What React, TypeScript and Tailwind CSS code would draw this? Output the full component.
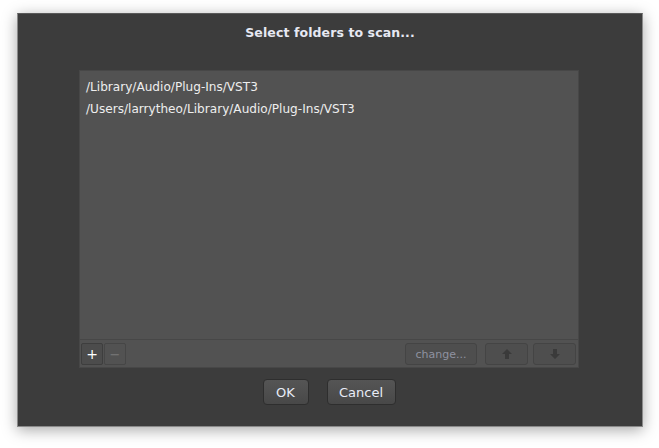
import React from 'react';

const paths = [
  '/Library/Audio/Plug-Ins/VST3',
  '/Users/larrytheo/Library/Audio/Plug-Ins/VST3',
];

const ArrowUp = () => (
  <svg width="12" height="12" viewBox="0 0 12 12">
    <path d="M6 1 L11 6 H8 V11 H4 V6 H1 Z" fill="#3a3a3a" />
  </svg>
);

const ArrowDown = () => (
  <svg width="12" height="12" viewBox="0 0 12 12">
    <path d="M6 11 L11 6 H8 V1 H4 V6 H1 Z" fill="#3a3a3a" />
  </svg>
);

const App: React.FC = () => {
  return (
    <div className="w-[659px] h-[448px] bg-white pt-[13px] pl-[17px] font-['DejaVu_Sans',sans-serif]">
      {/* dialog */}
      <div className="w-[626px] h-[414px] bg-[#3c3c3c] border border-[#8a8a8a] border-t-[#5a5a5a] shadow-[0_3px_14px_rgba(0,0,0,0.35)] flex flex-col items-center">
        <h1 className="mt-[11px] text-[12.5px] font-bold text-[#e6e8f2] tracking-[0.1px] leading-[16px]">
          Select folders to scan...
        </h1>

        {/* folder list */}
        <div className="mt-[29px] ml-[-2px] w-[500px] h-[298px] bg-[#525252] border border-[#474747] flex flex-col">
          <div className="flex-1 pt-[5px] pl-[6px]">
            {paths.map((p) => (
              <div key={p} className="h-[22px] leading-[22px] text-[12.1px] text-[#eeeeee]">
                {p}
              </div>
            ))}
          </div>

          {/* toolbar */}
          <div className="h-[28px] border-t border-[#474747] flex items-start pt-[3px] px-[1px]">
            <button className="w-[22px] h-[22px] rounded-[2px] bg-[#4c4c4c] border border-[#3e3e3e] flex items-center justify-center text-white text-[14px] leading-none">
              +
            </button>
            <button className="ml-[1px] w-[22px] h-[22px] rounded-[2px] bg-[#525252] border border-[#464646] flex items-center justify-center text-[#7a7a7a] text-[13px] leading-none">
              −
            </button>
            <div className="flex-1" />
            <button className="w-[72px] h-[22px] rounded-[3px] bg-[#4e4e4e] border border-[#444] text-[11px] text-[#8e92a0] leading-none">
              change...
            </button>
            <button className="ml-[8px] w-[43px] h-[22px] rounded-[3px] bg-[#4e4e4e] border border-[#444] flex items-center justify-center">
              <ArrowUp />
            </button>
            <button className="ml-[5px] mr-[1px] w-[43px] h-[22px] rounded-[3px] bg-[#4e4e4e] border border-[#444] flex items-center justify-center">
              <ArrowDown />
            </button>
          </div>
        </div>

        {/* action buttons */}
        <div className="mt-[11px] ml-[-2px] flex gap-[18px]">
          <button className="w-[46px] h-[26px] rounded-[4px] bg-gradient-to-b from-[#555] to-[#484848] border border-[#2e2e2e] text-[13px] text-[#e8ecf6] leading-none">
            OK
          </button>
          <button className="w-[69px] h-[26px] rounded-[4px] bg-gradient-to-b from-[#555] to-[#484848] border border-[#2e2e2e] text-[13px] text-[#e8ecf6] leading-none">
            Cancel
          </button>
        </div>
      </div>
    </div>
  );
};

export default App;
